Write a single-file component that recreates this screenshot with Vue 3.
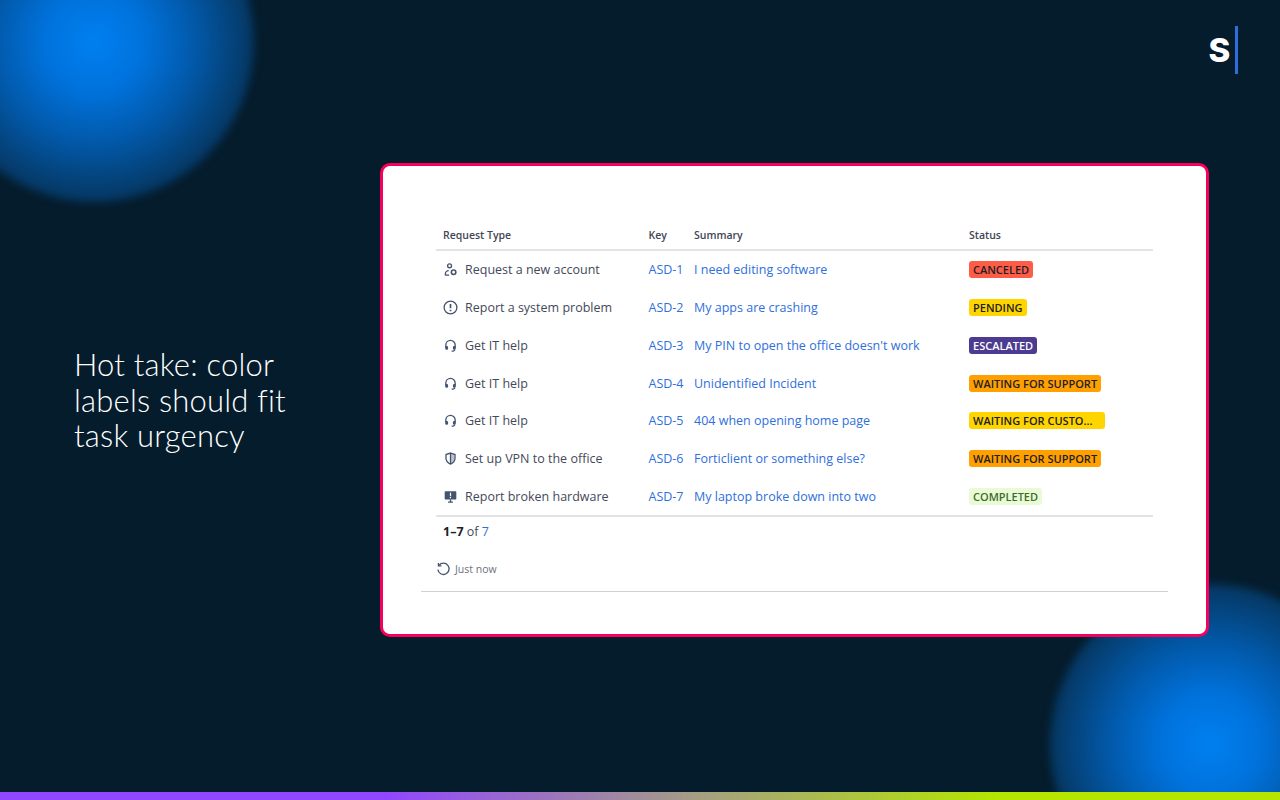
<script setup>
const rows = [
  { icon: 'account', type: 'Request a new account', key: 'ASD-1', summary: 'I need editing software', status: 'CANCELED', tone: 'red' },
  { icon: 'problem', type: 'Report a system problem', key: 'ASD-2', summary: 'My apps are crashing', status: 'PENDING', tone: 'yellow' },
  { icon: 'help', type: 'Get IT help', key: 'ASD-3', summary: "My PIN to open the office doesn't work", status: 'ESCALATED', tone: 'purple' },
  { icon: 'help', type: 'Get IT help', key: 'ASD-4', summary: 'Unidentified Incident', status: 'WAITING FOR SUPPORT', tone: 'orange' },
  { icon: 'help', type: 'Get IT help', key: 'ASD-5', summary: '404 when opening home page', status: 'WAITING FOR CUSTO...', tone: 'yellow wide' },
  { icon: 'vpn', type: 'Set up VPN to the office', key: 'ASD-6', summary: 'Forticlient or something else?', status: 'WAITING FOR SUPPORT', tone: 'orange' },
  { icon: 'hardware', type: 'Report broken hardware', key: 'ASD-7', summary: 'My laptop broke down into two', status: 'COMPLETED', tone: 'green' },
]
</script>

<template>
  <div class="slide">
    <div class="blob blob-top"></div>
    <div class="blob blob-bottom"></div>

    <div class="logo">
      <span class="logo-s">S</span>
      <span class="logo-bar"></span>
    </div>

    <main class="content">
      <h1 class="title">Hot take: color labels should fit task urgency</h1>

      <section class="card">
        <div class="table">
          <div class="row head">
            <span class="type-head">Request Type</span>
            <span>Key</span>
            <span>Summary</span>
            <span>Status</span>
          </div>

          <div v-for="row in rows" :key="row.key" class="row">
            <span class="type">
              <svg class="icon" viewBox="0 0 16 16" fill="none" stroke="#44546f" stroke-width="1.4">
                <template v-if="row.icon === 'account'">
                  <circle cx="7" cy="4" r="2.1" />
                  <path d="M2.5 14v-1.2c0-2 1.6-3.6 3.6-3.6" />
                  <path d="M2.5 14h4" />
                  <circle cx="11.3" cy="11" r="2.4" stroke-width="1.7" />
                </template>
                <template v-else-if="row.icon === 'problem'">
                  <circle cx="8" cy="8" r="6.8" />
                  <path d="M8 4.2v4.6" stroke-width="1.8" />
                  <path d="M8 10.4v1.6" stroke-width="1.8" />
                </template>
                <template v-else-if="row.icon === 'help'">
                  <path d="M3 10V7.6a5 5 0 0 1 10 0V10" />
                  <rect x="2.4" y="8.4" width="3" height="4.2" rx="1.3" fill="#44546f" stroke="none" />
                  <rect x="10.6" y="8.4" width="3" height="4.2" rx="1.3" fill="#44546f" stroke="none" />
                  <path d="M12.4 12.4c0 1.1-1 1.6-3.2 1.6" />
                </template>
                <template v-else-if="row.icon === 'vpn'">
                  <path d="M8 2.2l4.8 1.6v4c0 3-2 5-4.8 6.2-2.8-1.2-4.8-3.2-4.8-6.2v-4z" />
                  <path d="M8 2.2v11.8" />
                  <path d="M8 3l4 1.3v3.5c0 2.5-1.6 4.2-4 5.3z" fill="#44546f" stroke="none" opacity="0.35" />
                </template>
                <template v-else>
                  <rect x="1.8" y="2.4" width="12.4" height="8.8" rx="0.8" fill="#44546f" stroke="none" />
                  <path d="M8 4v3.6M8 8.6v1.2" stroke="#fff" stroke-width="1.3" />
                  <path d="M8 11v2.6M5.4 14h5.2" />
                </template>
              </svg>
              {{ row.type }}
            </span>
            <a class="link">{{ row.key }}</a>
            <a class="link">{{ row.summary }}</a>
            <span><span class="lozenge" :class="row.tone">{{ row.status }}</span></span>
          </div>
        </div>

        <div class="pager"><b>1–7</b> of <a class="link">7</a></div>

        <div class="refresh">
          <svg class="refresh-icon" viewBox="0 0 16 16" fill="none" stroke="#44546f" stroke-width="1.4">
            <path d="M3.2 3.6A6 6 0 1 1 2 8.2" />
            <path d="M2.6 1v3.2h3.2" />
          </svg>
          Just now
        </div>
      </section>
    </main>

    <div class="rainbow"></div>
  </div>
</template>

<style>
html,
body {
  margin: 0;
  background: #051c2c;
}
</style>

<style scoped>
.slide {
  position: relative;
  width: 1280px;
  height: 800px;
  overflow: hidden;
  background: #051c2c;
  font-family: "Open Sans", "Noto Sans", sans-serif;
}

/* glow in the corners */
.blob {
  position: absolute;
  width: 320px;
  height: 320px;
  border-radius: 50%;
  background: radial-gradient(circle, #0080f0 0%, #0072dc 22%, #0258a8 45%, #053a68 68%, #051c2c 100%);
  filter: blur(4px);
}

.blob-top {
  left: -66px;
  top: -118px;
}

.blob-bottom {
  left: 1050px;
  top: 584px;
}

.logo {
  position: absolute;
  left: 1207px;
  top: 26px;
  display: flex;
  align-items: center;
  gap: 3px;
  height: 48px;
}

.logo-s {
  color: #fff;
  font-family: "Inter", sans-serif;
  font-weight: 800;
  font-size: 33px;
  line-height: 48px;
  width: 25px;
  text-align: center;
}

.logo-bar {
  width: 3px;
  height: 48px;
  background: #2f6fdc;
}

.content {
  position: relative;
  height: 792px;
  display: flex;
  padding: 163px 0 0 74px;
  box-sizing: border-box;
}

.title {
  width: 240px;
  margin: 184px 66px 0 0;
  color: #fff;
  font-family: "Lato", sans-serif;
  font-weight: 300;
  font-size: 31px;
  line-height: 35.5px;
  letter-spacing: 0.2px;
}

.card {
  width: 829px;
  height: 474px;
  box-sizing: border-box;
  border: 3px solid #f5005a;
  border-radius: 10px;
  background: #fff;
  padding: 62px 38px 0;
}

.table {
  margin: 0 15px;
  border-bottom: 2px solid #e2e3e5;
}

.row {
  display: grid;
  grid-template-columns: 205.5px 45.5px 275px 1fr;
  align-items: center;
  height: 37.75px;
  padding-left: 7px;
  font-size: 12.5px;
  color: #44495a;
}

.head {
  height: 21px;
  font-size: 10.5px;
  font-weight: 600;
  color: #3f4656;
  border-bottom: 2px solid #e2e3e5;
  align-items: start;
}

.type {
  display: flex;
  align-items: center;
  gap: 7px;
}

.icon {
  width: 15px;
  height: 15px;
  flex: none;
}

.link {
  color: #2f6fdc;
}

.lozenge {
  display: inline-block;
  padding: 0 4px;
  height: 17px;
  line-height: 17px;
  border-radius: 3px;
  font-size: 11px;
  font-weight: 600;
  color: #1d2125;
  white-space: nowrap;
}

.red {
  background: #ff5c47;
}

.yellow {
  background: #ffd500;
}

.orange {
  background: #ffa000;
}

.purple {
  background: #4c3b91;
  color: #fff;
}

.green {
  background: #e9fbd6;
  color: #3f6b2c;
}

.wide {
  width: 128px;
}

.pager {
  margin: 6px 0 0 22px;
  font-size: 12.5px;
  line-height: 18px;
  color: #44495a;
}

.pager b {
  color: #1d2125;
}

.refresh {
  display: flex;
  align-items: center;
  gap: 4px;
  margin: 19px 0 0 15px;
  height: 18px;
  font-size: 10.5px;
  color: #6b7280;
  padding-bottom: 13px;
  border-bottom: 1px solid #cfd1d4;
  margin-left: 0;
  padding-left: 15px;
}

.refresh-icon {
  width: 15px;
  height: 15px;
}

.rainbow {
  position: absolute;
  left: 0;
  right: 0;
  bottom: 0;
  height: 8px;
  background: linear-gradient(90deg, #9146ff 0%, #9146ff 30%, #a5a080 55%, #b4e600 78%, #b4e600 100%);
}
</style>
